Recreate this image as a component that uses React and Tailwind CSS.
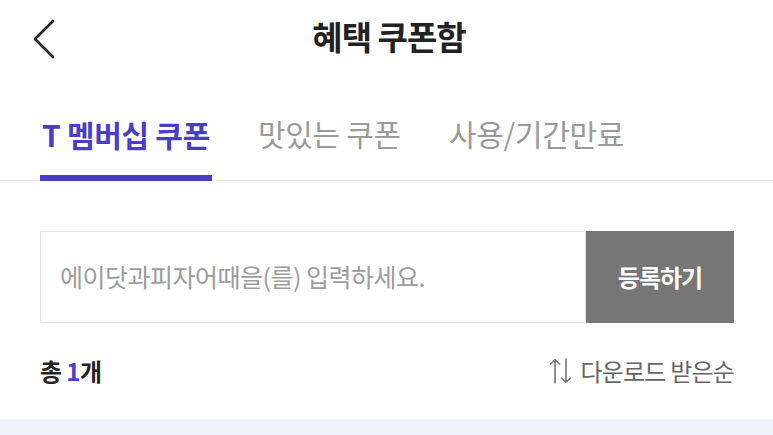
import React from "react";

const font = { fontFamily: '"Noto Sans CJK KR", "Noto Sans", sans-serif' };

export default function App() {
  return (
    <div className="w-[773px] h-[435px] bg-white overflow-hidden flex flex-col" style={font}>
      {/* Header */}
      <div className="relative h-[78px] flex items-center justify-center">
        <button className="absolute left-[30px] top-[19px] w-[28px] h-[40px] flex items-center justify-center">
          <svg width="26" height="40" viewBox="0 0 26 40" fill="none">
            <path d="M22 2 L4 20 L22 38" stroke="#222" strokeWidth="2.6" strokeLinecap="round" strokeLinejoin="round" />
          </svg>
        </button>
        <h1 className="text-[33px] font-bold text-[#222] tracking-[-1px] leading-none -mt-[6px] ml-[5px]">혜택 쿠폰함</h1>
      </div>

      {/* Tabs */}
      <div className="h-[103px] border-b border-[#ececec] px-[40px] flex items-end gap-[44px]">
        <div className="h-full flex flex-col justify-end">
          <div className="px-[2px] text-[30px] font-bold text-[#4a3ec6] tracking-[-0.3px] leading-none pb-[26px]">T 멤버십 쿠폰</div>
          <div className="h-[6px] bg-[#4a3ec6] -mb-px"></div>
        </div>
        <div className="h-full flex flex-col justify-end">
          <div className="px-[2px] text-[30px] text-[#9a9a9a] tracking-[-0.3px] leading-none pb-[32px]">맛있는 쿠폰</div>
        </div>
        <div className="h-full flex flex-col justify-end">
          <div className="px-[2px] text-[30px] text-[#9a9a9a] tracking-[-0.3px] leading-none pb-[32px]">사용/기간만료</div>
        </div>
      </div>

      {/* Coupon input */}
      <div className="px-[40px] pr-[39px] pt-[50px] flex">
        <div className="flex-1 h-[92px] border border-[#e6e6e6] flex items-center pl-[19px]">
          <span className="text-[25px] text-[#9c9c9c] tracking-[-0.5px]">에이닷과피자어때을(를) 입력하세요.</span>
        </div>
        <button className="w-[148px] h-[92px] bg-[#767676] flex items-center justify-center">
          <span className="text-[24px] font-bold text-white tracking-[-1px]">등록하기</span>
        </button>
      </div>

      {/* Count & sort */}
      <div className="px-[40px] pr-[39px] h-[96px] flex items-center justify-between">
        <div className="text-[24px] font-bold text-[#222] tracking-[-0.6px]">
          총 <span className="text-[#4a3ec6]">1</span>개
        </div>
        <div className="flex items-center gap-[7px] text-[#666]">
          <svg width="24" height="26" viewBox="0 0 24 26" fill="none" stroke="#777" strokeWidth="1.6" strokeLinecap="round" strokeLinejoin="round">
            <path d="M6 25 V1.5 M1.5 6 L6 1.5 L10.5 6" />
            <path d="M17 1 V24.5 M12.5 20 L17 24.5 L21.5 20" />
          </svg>
          <span className="text-[24px] tracking-[-0.8px]">다운로드 받은순</span>
        </div>
      </div>

      {/* Bottom band */}
      <div className="flex-1 bg-[#eef1f9]"></div>
    </div>
  );
}
